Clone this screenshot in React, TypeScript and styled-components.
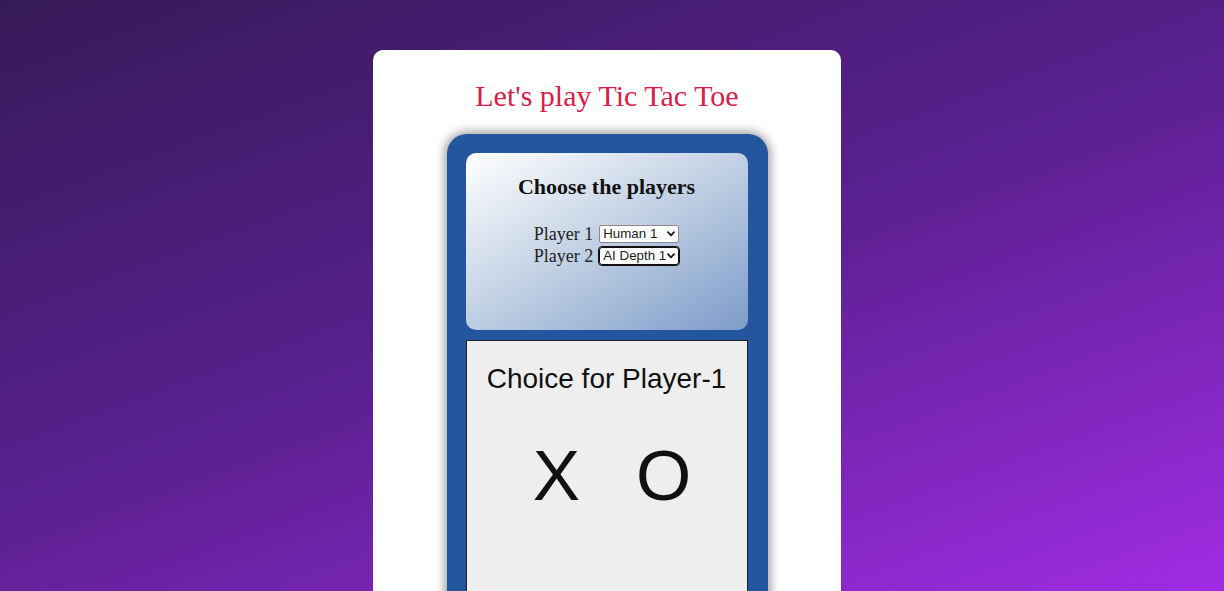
import React from "react";
import styled, { createGlobalStyle } from "styled-components";

const Global = createGlobalStyle`
  html, body { margin: 0; padding: 0; }
  body {
    height: 591px;
    background: linear-gradient(160deg, #361a58 0%, #5a2090 50%, #a02ce4 100%);
    font-family: "Liberation Serif", "Times New Roman", serif;
    overflow: hidden;
  }
`;

const Page = styled.div`
  display: flex;
  justify-content: center;
  padding: 50px 10px 0 0;
  height: 591px;
  box-sizing: border-box;
  overflow: hidden;
`;

const Card = styled.div`
  width: 468px;
  height: 700px;
  flex-shrink: 0;
  background: #fff;
  border-radius: 10px;
  display: flex;
  flex-direction: column;
  align-items: center;
  padding-top: 28px;
  box-sizing: border-box;
`;

const Title = styled.h1`
  margin: 0 0 20px;
  font-family: "Liberation Serif", serif;
  font-weight: normal;
  font-size: 30px;
  line-height: 36px;
  color: #d71e48;
`;

const Frame = styled.div`
  width: 321px;
  box-sizing: border-box;
  background: #2456a0;
  border-radius: 20px;
  padding: 19px 20px 0 19px;
  box-shadow: 0 0 10px 3px rgba(0, 0, 0, 0.35);
  display: flex;
  flex-direction: column;
  gap: 10px;
  flex: 1;
`;

const Setup = styled.div`
  height: 177px;
  border-radius: 10px;
  background: linear-gradient(150deg, #ffffff 0%, #c6d4e6 45%, #7d9cc8 100%);
  display: flex;
  flex-direction: column;
  align-items: center;
  padding-top: 21px;
  box-sizing: border-box;
`;

const SetupHeading = styled.h3`
  margin: 0 0 23px;
  font-size: 22px;
  line-height: 26px;
  font-weight: bold;
  color: #111;
`;

const PlayerRow = styled.label`
  display: flex;
  align-items: center;
  gap: 6px;
  font-size: 18px;
  line-height: 22px;
  color: #222;
`;

const SelectWrap = styled.span`
  position: relative;
  display: inline-flex;
`;

const PlayerSelect = styled.select<{ $focused?: boolean }>`
  appearance: none;
  -webkit-appearance: none;
  font-family: "Liberation Sans", Arial, sans-serif;
  font-size: 13.333px;
  width: 80px;
  height: 18px;
  padding: 0 12px 0 3px;
  margin: 0;
  border: 1px solid ${(p) => (p.$focused ? "#111" : "#8a8a8a")};
  border-radius: ${(p) => (p.$focused ? "3px" : "2px")};
  outline: ${(p) => (p.$focused ? "1px solid #111" : "none")};
  background: #fff;
  color: #222;
  line-height: 16px;
`;

const Chevron = styled.svg`
  position: absolute;
  right: 4px;
  top: 6px;
  width: 8px;
  height: 6px;
  pointer-events: none;
`;

const Choice = styled.div`
  flex: 1;
  background: #eeeeee;
  border: 1px solid #222;
  border-bottom: none;
  display: flex;
  flex-direction: column;
  align-items: center;
  font-family: "Liberation Sans", Arial, sans-serif;
  color: #111;
`;

const ChoiceTitle = styled.div`
  margin-top: 21px;
  font-size: 28px;
  line-height: 34px;
`;

const Marks = styled.div`
  display: flex;
  gap: 27px;
  margin-top: 36px;
  padding-left: 7px;
`;

const Mark = styled.div`
  width: 80px;
  text-align: center;
  font-size: 71px;
  line-height: 88px;
  cursor: pointer;
`;

function Select({ value, options, focused }: { value: string; options: string[]; focused?: boolean }) {
  return (
    <SelectWrap>
      <PlayerSelect $focused={focused} defaultValue={value}>
        {options.map((o) => (
          <option key={o} value={o}>
            {o}
          </option>
        ))}
      </PlayerSelect>
      <Chevron viewBox="0 0 8 6">
        <path d="M1 1.2 L4 4.4 L7 1.2" fill="none" stroke="#1a1a1a" strokeWidth="1.8" strokeLinecap="round" strokeLinejoin="round" />
      </Chevron>
    </SelectWrap>
  );
}

export default function App() {
  return (
    <>
      <Global />
      <Page>
        <Card>
          <Title>Let's play Tic Tac Toe</Title>
          <Frame>
            <Setup>
              <SetupHeading>Choose the players</SetupHeading>
              <PlayerRow>
                Player 1
                <Select value="Human 1" options={["Human 1", "AI Depth 1", "AI Depth 2"]} />
              </PlayerRow>
              <PlayerRow>
                Player 2
                <Select focused value="AI Depth 1" options={["Human 2", "AI Depth 1", "AI Depth 2"]} />
              </PlayerRow>
            </Setup>
            <Choice>
              <ChoiceTitle>Choice for Player-1</ChoiceTitle>
              <Marks>
                <Mark>X</Mark>
                <Mark>O</Mark>
              </Marks>
            </Choice>
          </Frame>
        </Card>
      </Page>
    </>
  );
}
